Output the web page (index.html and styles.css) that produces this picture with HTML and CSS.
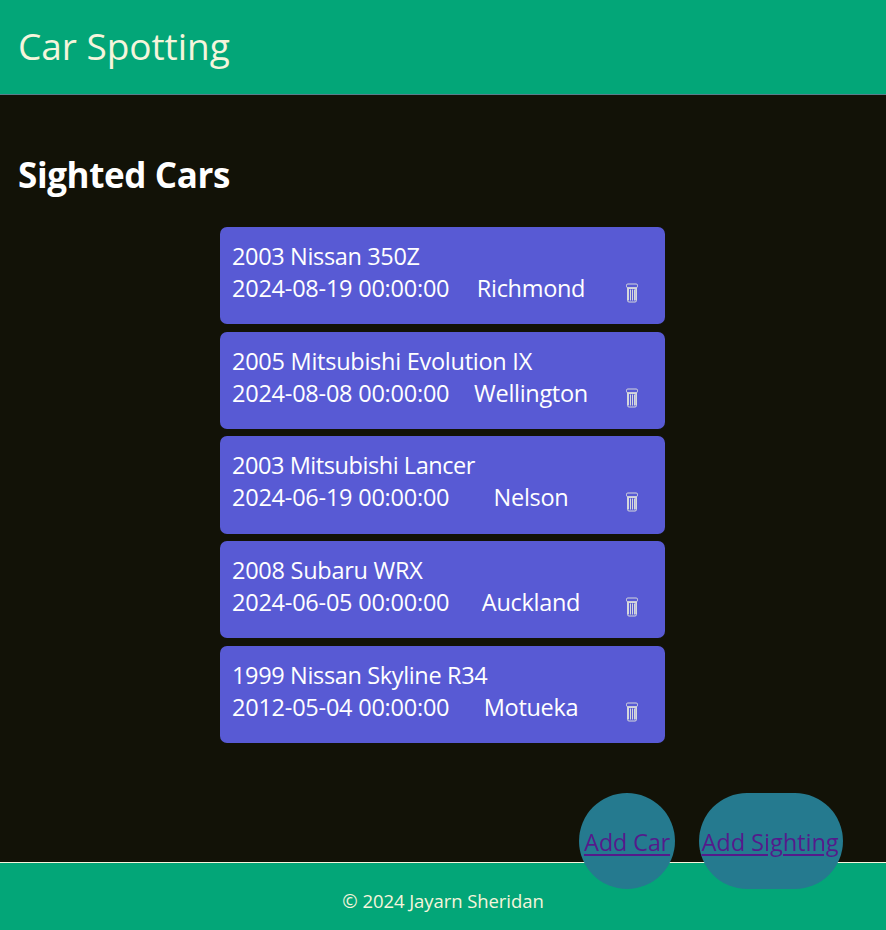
FILE: index.html
```html
<!DOCTYPE html>
<html lang="en">
<head>
<meta charset="utf-8">
<title>Car Spotting</title>
<link rel="stylesheet" href="styles.css">
</head>
<body>
<svg class="sprite" aria-hidden="true">
  <symbol id="bin" viewBox="0 0 14 20">
    <rect x="1.5" y="1" width="11" height="3.6" rx="1.3"/>
    <path d="M2.500 4.600V17.500Q2.500 19 4 19H10Q11.500 19 11.500 17.500V4.600M3 5.500H11M3.500 6V17.500M5.500 6.500V17.500M7.500 6.500V17.500M9.500 6.500V17.500M10.700 6V17.500"/>
  </symbol>
</svg>
<header class="site-header"><span class="brand">Car Spotting</span></header>
<main class="content">
  <h1 class="heading"><span>Sighted Cars</span></h1>
  <section class="list">
    <article class="card">
      <p class="car"><span>2003 Nissan 350Z</span></p>
      <span class="date">2024-08-19 00:00:00</span><span class="place">Richmond</span><a class="delete" href="#"><svg class="icon"><use href="#bin"/></svg></a>
    </article>
    <article class="card">
      <p class="car wide"><span>2005 Mitsubishi Evolution IX</span></p>
      <span class="date">2024-08-08 00:00:00</span><span class="place">Wellington</span><a class="delete" href="#"><svg class="icon"><use href="#bin"/></svg></a>
    </article>
    <article class="card">
      <p class="car tight"><span>2003 Mitsubishi Lancer</span></p>
      <span class="date">2024-06-19 00:00:00</span><span class="place">Nelson</span><a class="delete" href="#"><svg class="icon"><use href="#bin"/></svg></a>
    </article>
    <article class="card">
      <p class="car wide"><span>2008 Subaru WRX</span></p>
      <span class="date">2024-06-05 00:00:00</span><span class="place">Auckland</span><a class="delete" href="#"><svg class="icon"><use href="#bin"/></svg></a>
    </article>
    <article class="card">
      <p class="car"><span>1999 Nissan Skyline R34</span></p>
      <span class="date">2012-05-04 00:00:00</span><span class="place">Motueka</span><a class="delete" href="#"><svg class="icon"><use href="#bin"/></svg></a>
    </article>
  </section>
</main>
<nav class="actions">
  <a class="round add-car" href="#">Add Car</a>
  <a class="round add-sighting" href="#">Add Sighting</a>
</nav>
<footer class="site-footer"><span>© 2024 Jayarn Sheridan</span></footer>
</body>
</html>
```
FILE: styles.css
```css
* { box-sizing: border-box; }
body {
  margin: 0;
  height: 930px;
  display: flex;
  flex-direction: column;
  overflow: hidden;
  background: #121207;
  color: #fff;
  font: 23.5px/32px "Open Sans", "Noto Sans", sans-serif;
}
.sprite { position: absolute; width: 0; height: 0; }
.site-header {
  height: 95px;
  flex: none;
  padding: 0 18px;
  background: #03a678;
  border-bottom: 1px solid #5a7d8c;
  color: beige;
  font-size: 37px;
  line-height: 92px;
  letter-spacing: -0.05px;
}
.content { flex: 1; min-height: 0; }
.heading {
  margin: 55px 0 28px 18px;
  font-size: 35px;
  line-height: 49px;
  font-weight: 700;
  letter-spacing: -0.38px;
}
.list {
  width: 445px;
  margin-left: 220px;
  display: flex;
  flex-direction: column;
  gap: 7.3px;
}
.card {
  height: 97.4px;
  padding: 13px 12px 0;
  border-radius: 7px;
  background: #585ad4;
  display: grid;
  grid-template-columns: 217px 164px 1fr;
  grid-template-rows: 32px 32px;
  white-space: nowrap;
}
.car { grid-column: 1 / -1; margin: 0; letter-spacing: -0.35px; }
.car.wide { letter-spacing: -0.26px; }
.car.tight { letter-spacing: -0.44px; }
.date { letter-spacing: -0.23px; }
.place { text-align: center; letter-spacing: -0.3px; }
.delete { padding: 11px 0 0 12px; line-height: 0; }
.icon {
  width: 14px;
  height: 20px;
  fill: none;
  stroke: #d5d8dc;
  stroke-width: 1;
}
.actions {
  position: fixed;
  left: 579px;
  top: 793px;
  display: flex;
  gap: 24px;
}
.round {
  height: 96px;
  border-radius: 48px;
  background: #257a8f;
  color: #551a8b;
  line-height: 98px;
  text-align: center;
  white-space: nowrap;
  text-decoration-thickness: 2px;
  text-underline-offset: 3px;
}
.add-car { width: 96px; letter-spacing: -0.15px; }
.add-sighting { width: 144px; padding-right: 2px; letter-spacing: 0; }
.site-footer {
  height: 68px;
  flex: none;
  border-top: 1px solid beige;
  background: #03a678;
  color: beige;
  font-size: 18.5px;
  line-height: 75px;
  text-align: center;
  letter-spacing: -0.07px;
}
```
